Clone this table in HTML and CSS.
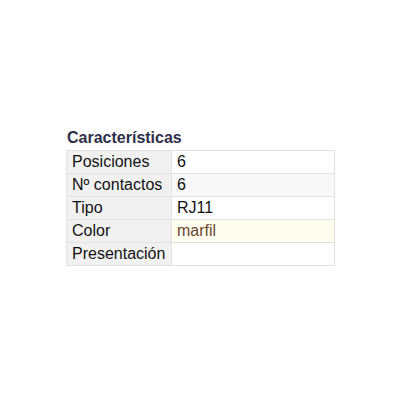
FILE: index.html
```html
<!DOCTYPE html>
<html>
<head>
<meta charset="utf-8">
<link rel="stylesheet" href="styles.css">
</head>
<body>
<div class="wrap">
  <h3 class="title">Características</h3>
  <table class="specs">
    <tr><td class="k">Posiciones</td><td class="v">6</td></tr>
    <tr class="alt"><td class="k">Nº contactos</td><td class="v">6</td></tr>
    <tr><td class="k">Tipo</td><td class="v">RJ11</td></tr>
    <tr class="hl"><td class="k">Color</td><td class="v color">marfil</td></tr>
    <tr><td class="k">Presentación</td><td class="v"></td></tr>
  </table>
</div>
</body>
</html>
```
FILE: styles.css
```css
html, body { margin: 0; padding: 0; background: #fff; }
body { font-family: "Liberation Sans", Arial, sans-serif; color: #111; }
.wrap { padding: 129px 0 0 66px; width: 269px; }
.title { margin: 0 0 3px 1px; font-size: 16px; font-weight: bold; color: #2f2f4a; line-height: 18px; }
.specs { border-collapse: collapse; width: 269px; font-size: 16px; }
.specs td { border: 1px solid #e2e2e2; height: 22px; padding: 0 0 0 5px; line-height: 22px; }
.specs .k { background: #f1f1f1; width: 99px; }
.specs .v { background: #fff; }
.specs .alt .v { background: #f8f8f8; }
.specs .hl .v { background: #fffdee; }
.specs .color { color: #6b4832; }
```
